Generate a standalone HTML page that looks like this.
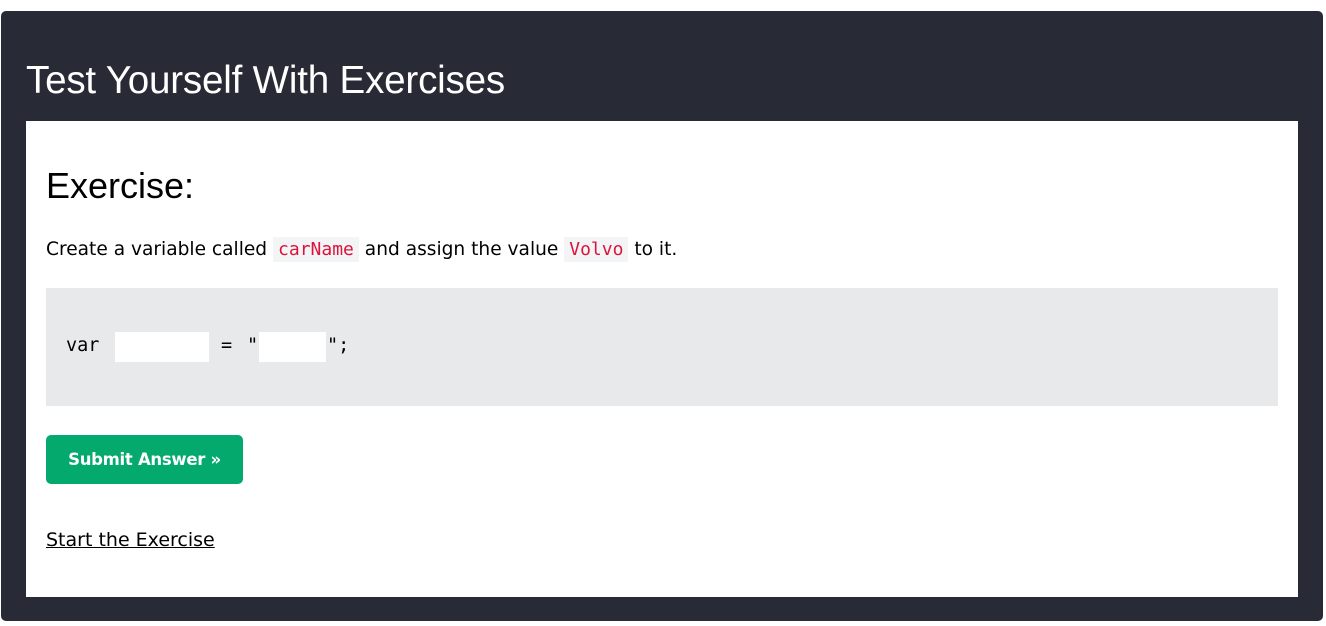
<!DOCTYPE html>
<html><head><style>
body{margin:0;background:#fff;width:1326px;height:626px;position:relative;font-family:"DejaVu Sans",Verdana,sans-serif;}
.outer{position:absolute;left:1px;top:11px;width:1322px;height:610px;background:#282a35;border-radius:5px;}
h2{position:absolute;left:26px;top:59px;margin:0;font-family:"Liberation Sans",sans-serif;font-weight:normal;font-size:38.6px;color:#fff;letter-spacing:-0.2px;}
.inner{position:absolute;left:26px;top:121px;width:1272px;height:476px;background:#fff;}
h3{position:absolute;left:46px;top:165px;margin:0;font-family:"Liberation Sans",sans-serif;font-weight:normal;font-size:36px;color:#000;}
.p{position:absolute;left:46px;top:239px;font-size:18.6px;color:#000;white-space:nowrap;}
code{font-family:"DejaVu Sans Mono",monospace;font-size:18px;color:#dc143c;background:#f3f4f6;padding:2px 5px;}
.code{position:absolute;left:46px;top:288px;width:1232px;height:118px;background:#e7e9eb;}
.t{position:absolute;top:335px;font-family:"DejaVu Sans Mono",monospace;font-size:18.5px;color:#000;}
.in{position:absolute;top:332px;height:30px;background:#fff;}
.btn{position:absolute;left:46px;top:435px;width:197px;height:49px;background:#04aa6d;border-radius:5px;color:#fff;font-weight:bold;font-size:16.5px;line-height:49px;text-align:center;letter-spacing:-0.3px;}
.a{position:absolute;left:46px;top:529px;font-size:19px;color:#000;text-decoration:underline;}
</style></head><body>
<div class="outer"></div>
<h2>Test Yourself With Exercises</h2>
<div class="inner"></div>
<h3>Exercise:</h3>
<div class="p">Create a variable called <code>carName</code> and assign the value <code>Volvo</code> to it.</div>
<div class="code"></div>
<span class="t" style="left:66px">var</span>
<div class="in" style="left:115px;width:94px"></div>
<span class="t" style="left:221px">=</span>
<span class="t" style="left:247px">"</span>
<div class="in" style="left:259px;width:67px"></div>
<span class="t" style="left:327px">";</span>
<div class="btn">Submit Answer »</div>
<div class="a">Start the Exercise</div>
</body></html>
